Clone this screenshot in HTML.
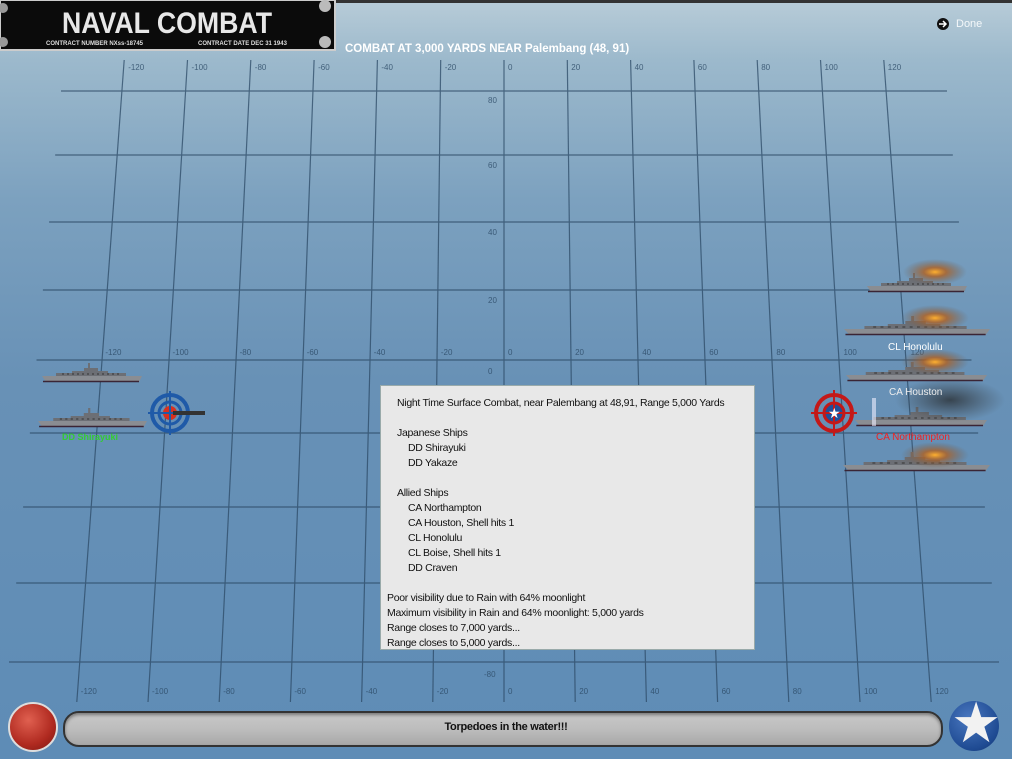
<!DOCTYPE html>
<html><head><meta charset="utf-8"><style>
body{margin:0;width:1012px;height:759px;overflow:hidden;position:relative;font-family:"Liberation Sans",sans-serif;
background:linear-gradient(180deg,#b8ccd8 0px,#9cb9cc 60px,#7ca1bf 200px,#6891b6 380px,#5e8cb6 759px);}
svg{position:absolute;left:0;top:0}
.t{position:absolute;white-space:nowrap}
#panel{position:absolute;left:380px;top:385px;width:373px;height:263px;background:#e8e8e8;border:1px solid #9aa;font-size:10.5px;color:#111;line-height:15px;letter-spacing:-0.3px}
#panel div{white-space:nowrap}
</style></head><body>
<svg width="1012" height="759">
<rect x="0" y="0" width="1012" height="3" fill="#333"/>
<g stroke="#2c4a66" stroke-width="1.2" opacity="0.75" fill="none" id="grid"></g>
<g font-size="8" fill="#2c4a66" opacity="0.8" id="lab"></g>
</svg>
<script>
var g=document.getElementById('grid'),L=document.getElementById('lab'),s='',t='';
var hy=[91,155,222,290,360,433,507,583,662];
hy.forEach(function(y){var l=61-(61-9)*(y-91)/(662-91);s+='<line x1="'+l+'" y1="'+y+'" x2="'+(1008-l)+'" y2="'+y+'"/>';});
for(var k=-6;k<=6;k++){var xt=504+63.3*k,xb=504+71.2*k;s+='<line x1="'+xt+'" y1="60" x2="'+xb+'" y2="702"/>';
var lab=(k*20);t+='<text x="'+(xt+4)+'" y="70">'+lab+'</text>';t+='<text x="'+(xb+4)+'" y="694">'+lab+'</text>';
var xm=504+67.1*k;t+='<text x="'+(xm+4)+'" y="355">'+lab+'</text>';}
[[80,103],[60,168],[40,235],[20,303],[0,374],[-80,677]].forEach(function(a){t+='<text x="'+(a[0]<0?484:488)+'" y="'+a[1]+'">'+a[0]+'</text>';});
g.innerHTML=s;L.innerHTML=t;
</script>
<svg width="1012" height="759">
<defs>
<g id="ship">
<path d="M0,4 L100,4 L97,10 L4,10 Z" fill="#8a8d92"/>
<path d="M1,9.5 L97,9.5" stroke="#3a2535" stroke-width="1.5"/>
<path d="M14,4 L14,1 L30,1 L30,-1 L42,-1 L42,-4 L46,-4 L46,-9 L48,-9 L48,-4 L56,-4 L56,-1 L66,-1 L66,1 L84,1 L84,4 Z" fill="#6c6f75"/>
<path d="M20,2h60" stroke="#333" stroke-width="1" stroke-dasharray="2 3"/>
</g>
<radialGradient id="fire"><stop offset="0" stop-color="#ffb030"/><stop offset="0.35" stop-color="#b06020" stop-opacity="0.8"/><stop offset="1" stop-color="#6a5a50" stop-opacity="0"/></radialGradient>
<radialGradient id="smoke"><stop offset="0" stop-color="#222" stop-opacity="0.7"/><stop offset="1" stop-color="#333" stop-opacity="0"/></radialGradient>
</defs>
<!-- logo -->
<rect x="0" y="0" width="335" height="50" fill="#0b0b0b" stroke="#ccc" stroke-width="2"/>
<text x="62" y="33" font-size="30" font-weight="bold" fill="#e8e8e8" font-family="Liberation Sans" textLength="210" lengthAdjust="spacingAndGlyphs">NAVAL COMBAT</text>
<text x="46" y="45" font-size="6" font-weight="bold" fill="#ddd">CONTRACT NUMBER  NXss-18745</text>
<text x="198" y="45" font-size="6" font-weight="bold" fill="#ddd">CONTRACT DATE DEC 31 1943</text>
<circle cx="325" cy="6" r="6" fill="#bbb"/><circle cx="325" cy="42" r="6" fill="#bbb"/><circle cx="3" cy="8" r="5" fill="#999"/><circle cx="3" cy="42" r="5" fill="#999"/>
<!-- left ships -->
<use href="#ship" transform="translate(42,372)"/>
<use href="#ship" transform="translate(38,417) scale(1.09,1)"/>
<!-- blue target -->
<g transform="translate(170,413)"><circle r="18" fill="none" stroke="#1f5aa8" stroke-width="4"/><circle r="11" fill="none" stroke="#1f5aa8" stroke-width="3"/><circle r="7" fill="#d83020"/><path d="M-22,0H22M0,-22V22" stroke="#1f5aa8" stroke-width="2"/><rect x="3" y="-2" width="32" height="4" fill="#333"/></g>
<!-- red target -->
<g transform="translate(834,413)"><circle r="18" fill="none" stroke="#c41818" stroke-width="4"/><circle r="10" fill="#1f4f9a" stroke="#c41818" stroke-width="3"/><path d="M-23,0H23M0,-23V23" stroke="#c41818" stroke-width="2"/><text x="-6" y="5" font-size="14" fill="#fff">★</text></g>
<!-- right ships -->
<use href="#ship" transform="translate(867,282)"/>
<use href="#ship" transform="translate(844,325) scale(1.46,1)"/>
<use href="#ship" transform="translate(846,371) scale(1.41,1)"/>
<use href="#ship" transform="translate(855,416) scale(1.32,1)"/>
<use href="#ship" transform="translate(843,461) scale(1.47,1)"/>
<ellipse cx="935" cy="272" rx="32" ry="13" fill="url(#fire)"/>
<ellipse cx="935" cy="318" rx="34" ry="13" fill="url(#fire)"/>
<ellipse cx="935" cy="362" rx="34" ry="13" fill="url(#fire)"/>
<ellipse cx="950" cy="400" rx="55" ry="22" fill="url(#smoke)"/>
<ellipse cx="935" cy="455" rx="34" ry="13" fill="url(#fire)"/>
<rect x="872" y="398" width="4" height="28" fill="#eef" opacity="0.6"/>
<!-- done -->
<circle cx="943" cy="24" r="6" fill="#111"/><path d="M939,24h6M943,21l3,3l-3,3" stroke="#fff" stroke-width="1.5" fill="none"/>
</svg>
<div class="t" style="left:956px;top:18px;font-size:11px;color:#f4f8fa">Done</div>
<div class="t" style="left:345px;top:43px;font-size:11.5px;font-weight:bold;color:#fff">COMBAT AT 3,000 YARDS NEAR Palembang (48, 91)</div>
<div class="t" style="left:62px;top:432px;font-size:9px;color:#3c3;font-weight:bold">DD Shirayuki</div>
<div class="t" style="left:888px;top:342px;font-size:10px;color:#fff">CL Honolulu</div>
<div class="t" style="left:889px;top:387px;font-size:10px;color:#eee">CA Houston</div>
<div class="t" style="left:876px;top:432px;font-size:10px;color:#e22">CA Northampton</div>
<div id="panel">
<div style="margin:10px 0 0 16px">Night Time Surface Combat, near Palembang at 48,91, Range 5,000 Yards</div>
<div style="margin:15px 0 0 16px">Japanese Ships</div>
<div style="margin-left:27px">DD Shirayuki</div>
<div style="margin-left:27px">DD Yakaze</div>
<div style="margin:15px 0 0 16px">Allied Ships</div>
<div style="margin-left:27px">CA Northampton</div>
<div style="margin-left:27px">CA Houston, Shell hits 1</div>
<div style="margin-left:27px">CL Honolulu</div>
<div style="margin-left:27px">CL Boise, Shell hits 1</div>
<div style="margin-left:27px">DD Craven</div>
<div style="margin:15px 0 0 6px">Poor visibility due to Rain with 64% moonlight</div>
<div style="margin-left:6px">Maximum visibility in Rain and 64% moonlight: 5,000 yards</div>
<div style="margin-left:6px">Range closes to 7,000 yards...</div>
<div style="margin-left:6px">Range closes to 5,000 yards...</div>
</div>
<div style="position:absolute;left:8px;top:702px;width:46px;height:46px;border-radius:50%;background:radial-gradient(circle at 40% 35%,#e06050,#b02a20 60%,#7a1510);border:2px solid #ddd"></div>
<div style="position:absolute;left:63px;top:711px;width:876px;height:32px;border-radius:16px;background:linear-gradient(#c8c8c8,#bdbdbd 50%,#a8a8a8);border:2px solid #333;box-shadow:inset 0 2px 3px #777"></div>
<div class="t" style="left:0;width:1012px;text-align:center;top:721px;font-size:11px;font-weight:bold;color:#111;letter-spacing:-0.3px">Torpedoes in the water!!!</div>
<div style="position:absolute;left:949px;top:701px;width:50px;height:50px;border-radius:50%;background:radial-gradient(circle at 40% 35%,#4a78c0,#1e4a92 70%,#14306a)"></div>
<div class="t" style="left:951px;top:693px;font-size:56px;color:#f2f2f2;line-height:60px">★</div>
</body></html>
